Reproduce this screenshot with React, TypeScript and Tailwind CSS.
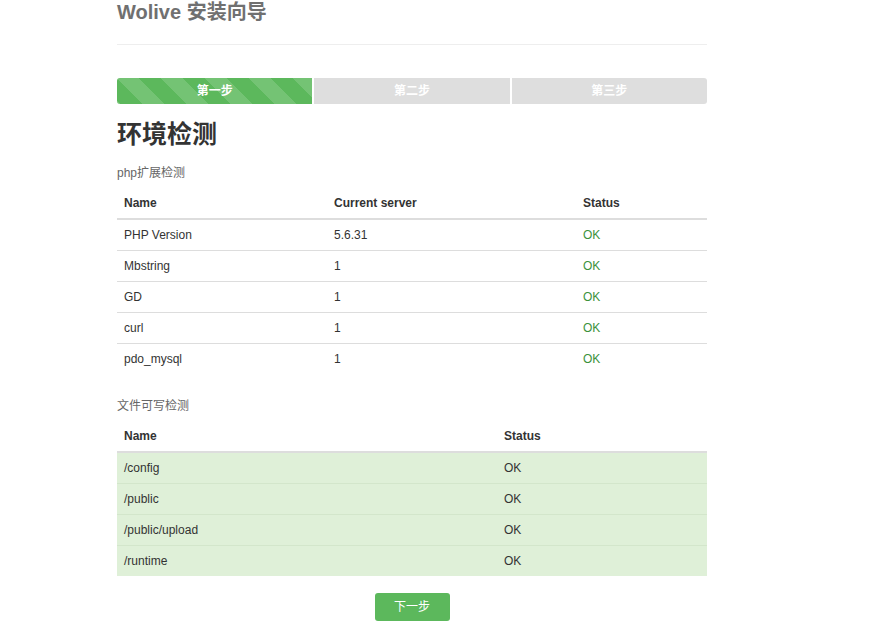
import React from "react";

const ext = [
  ["PHP Version", "5.6.31"],
  ["Mbstring", "1"],
  ["GD", "1"],
  ["curl", "1"],
  ["pdo_mysql", "1"],
];
const files = ["/config", "/public", "/public/upload", "/runtime"];

export default function App() {
  return (
    <div
      className="min-h-[630px] w-[880px] bg-white text-[#333] text-[12px]"
      style={{ fontFamily: '"Liberation Sans", Arial, "Noto Sans CJK SC", sans-serif' }}
    >
      <div className="ml-[117px] w-[590px]">
        <h3 className="m-0 text-[20px] leading-[24px] font-bold text-[#707070]">Wolive 安装向导</h3>
        <div className="mt-[20px] border-t border-[#eee]" />
        <div className="mt-[33px] flex h-[26px] gap-[2px] overflow-hidden rounded-[3px] text-[12px] font-bold leading-[26px] text-white">
          <div className="flex-1 bg-[#5cb85c] bg-[linear-gradient(45deg,rgba(255,255,255,.15)_25%,transparent_25%,transparent_50%,rgba(255,255,255,.15)_50%,rgba(255,255,255,.15)_75%,transparent_75%,transparent)] bg-[length:44px_44px] text-center">
            第一步
          </div>
          <div className="flex-1 bg-[#dedede] text-center">第二步</div>
          <div className="flex-1 bg-[#dedede] text-center">第三步</div>
        </div>
        <h2 className="m-0 mt-[15px] text-[25px] leading-[30px] font-bold text-[#333]">环境检测</h2>
        <p className="m-0 mt-[16px] text-[12px] leading-[17px] text-[#666]">php扩展检测</p>
        <table className="mt-[6px] w-[590px] border-collapse">
          <thead>
            <tr className="border-b-2 border-[#ddd]">
              <th className="h-[31px] w-[210px] px-[7px] text-left font-bold">Name</th>
              <th className="h-[31px] w-[249px] px-[7px] text-left font-bold">Current server</th>
              <th className="h-[31px] px-[7px] text-left font-bold">Status</th>
            </tr>
          </thead>
          <tbody>
            {ext.map(([n, v], i) => (
              <tr key={n} className={i > 0 ? "border-t border-[#ddd]" : ""}>
                <td className="h-[31px] px-[7px]">{n}</td>
                <td className="h-[31px] px-[7px]">{v}</td>
                <td className="h-[31px] px-[7px] text-[#3b923b]">OK</td>
              </tr>
            ))}
          </tbody>
        </table>
        <p className="m-0 mt-[24px] text-[12px] leading-[17px] text-[#666]">文件可写检测</p>
        <table className="mt-[6px] w-[590px] border-collapse">
          <thead>
            <tr className="border-b-2 border-[#ddd]">
              <th className="h-[31px] w-[380px] px-[7px] text-left font-bold">Name</th>
              <th className="h-[31px] px-[7px] text-left font-bold">Status</th>
            </tr>
          </thead>
          <tbody>
            {files.map((f, i) => (
              <tr key={f} className={"bg-[#dff0d8] " + (i > 0 ? "border-t border-[#d3e6cb]" : "")}>
                <td className="h-[31px] px-[7px]">{f}</td>
                <td className="h-[31px] px-[7px]">OK</td>
              </tr>
            ))}
          </tbody>
        </table>
        <div className="mt-[17px] flex justify-center">
          <button className="h-[28px] w-[75px] rounded-[3px] bg-[#5cb85c] text-[12px] text-white">下一步</button>
        </div>
      </div>
    </div>
  );
}
